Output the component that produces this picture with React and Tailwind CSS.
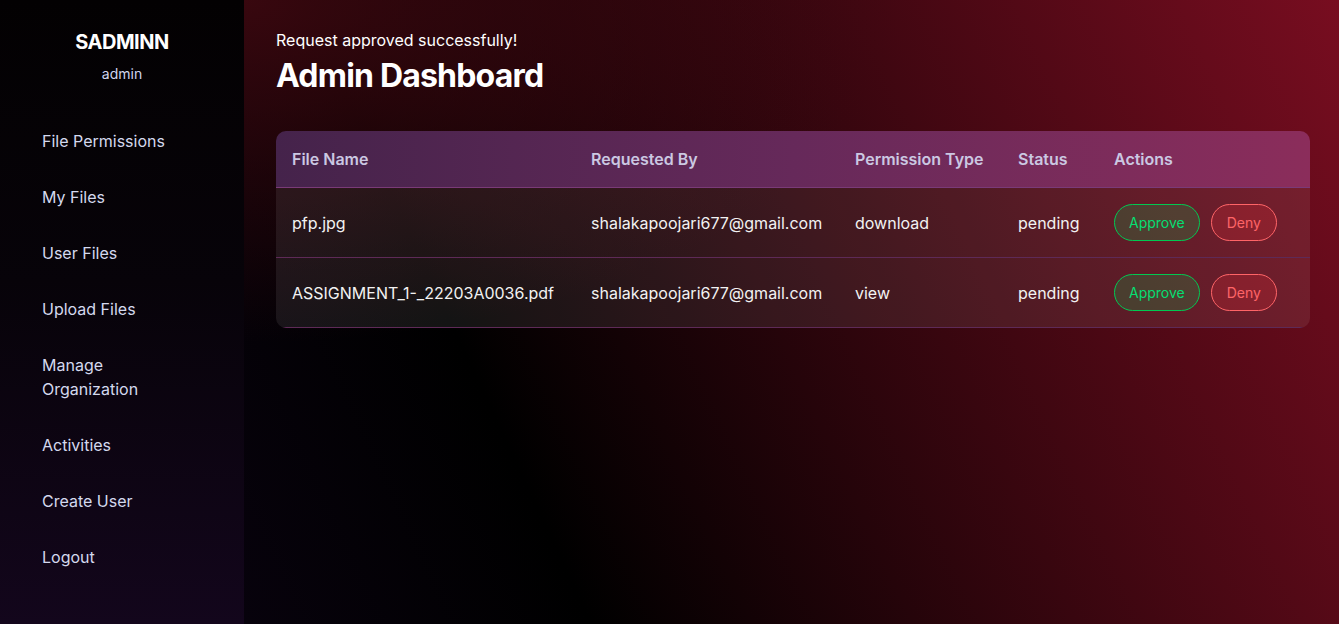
import React from "react";

const navItems = [
  "File Permissions",
  "My Files",
  "User Files",
  "Upload Files",
  "Manage Organization",
  "Activities",
  "Create User",
  "Logout",
];

const requests = [
  { file: "pfp.jpg", by: "shalakapoojari677@gmail.com", type: "download", status: "pending" },
  { file: "ASSIGNMENT_1-_22203A0036.pdf", by: "shalakapoojari677@gmail.com", type: "view", status: "pending" },
];

export default function App() {
  return (
    <div className="flex min-h-screen font-['Inter',sans-serif] text-white">
      <aside className="w-[244px] shrink-0 bg-[linear-gradient(to_bottom,#030102_0%,#070309_45%,#13061c_100%)]">
        <div className="pt-[28px] text-center">
          <h2 className="text-[20px] leading-[28px] font-bold tracking-tight">SADMINN</h2>
          <p className="mt-[8px] text-sm leading-5 text-[#cfd5ee]">admin</p>
        </div>
        <nav className="mt-[29px] pl-[42px]">
          <ul>
            {navItems.map((item) => (
              <li key={item} className="w-[140px] py-4 text-base leading-6 text-[#d4d9ee]">
                {item}
              </li>
            ))}
          </ul>
        </nav>
      </aside>

      <main className="flex-1 px-8 pt-[28px] bg-[radial-gradient(ellipse_60%_55%_at_0%_0%,rgba(62,8,16,0.9),transparent),linear-gradient(65deg,#07020c_0%,#000_25%,#780d20_100%)]">
        <p className="text-base leading-6 text-white">Request approved successfully!</p>
        <h1 className="mt-[4px] text-[32px] leading-[40px] font-bold tracking-tight">Admin Dashboard</h1>

        <div className="mt-[35px] w-[1034px] overflow-hidden rounded-[10px]">
          <table className="w-full table-fixed border-collapse text-left">
            <thead className="bg-gradient-to-r from-[#45234b] via-[#66295a] to-[#8b2d5b]">
              <tr className="h-[56px] border-b border-[#7a3a78]">
                <th className="w-[299px] px-4 text-base font-semibold text-[#cbc8e2]">File Name</th>
                <th className="w-[264px] px-4 text-base font-semibold text-[#cbc8e2]">Requested By</th>
                <th className="w-[163px] px-4 text-base font-semibold text-[#cbc8e2]">Permission Type</th>
                <th className="w-[96px] px-4 text-base font-semibold text-[#cbc8e2]">Status</th>
                <th className="px-4 text-base font-semibold text-[#cbc8e2]">Actions</th>
              </tr>
            </thead>
            <tbody>
              {requests.map((r) => (
                <tr key={r.file} className="h-[70px] border-b border-[#5e2a57] bg-white/[0.08]">
                  <td className="px-4 pt-px text-base text-[#f2f2f2]">{r.file}</td>
                  <td className="px-4 pt-px text-base text-[#f2f2f2]">{r.by}</td>
                  <td className="px-4 pt-px text-base text-[#f2f2f2]">{r.type}</td>
                  <td className="px-4 pt-px text-base text-[#f2f2f2]">{r.status}</td>
                  <td className="px-4 pt-px">
                    <div className="flex items-center gap-[11px]">
                      <button className="h-[37px] rounded-full border border-green-500 bg-green-500/20 px-[14px] text-sm text-green-400">
                        Approve
                      </button>
                      <button className="h-[37px] rounded-full border border-red-400 bg-red-500/20 px-[15px] text-sm text-red-400">
                        Deny
                      </button>
                    </div>
                  </td>
                </tr>
              ))}
            </tbody>
          </table>
        </div>
      </main>
    </div>
  );
}
